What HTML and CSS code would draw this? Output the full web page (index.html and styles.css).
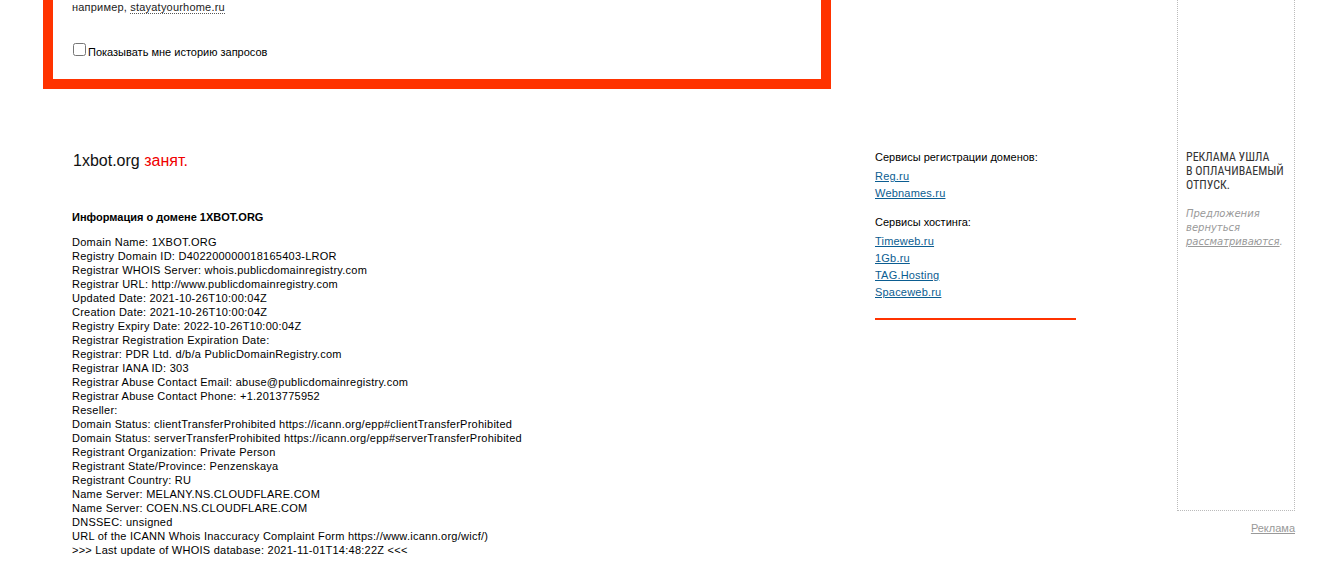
FILE: index.html
```html
<!DOCTYPE html>
<html lang="ru">
<head>
<meta charset="utf-8">
<title>Whois 1xbot.org</title>
<link rel="stylesheet" href="styles.css">
</head>
<body>
<div class="page">
  <div class="main">
    <div class="search-box">
      <p class="hint">например, <span class="example">stayatyourhome.ru</span></p>
      <label class="history"><input type="checkbox" class="check"><span>Показывать мне историю запросов</span></label>
    </div>
    <div class="result-row">
      <div class="result">
        <h1 class="status">1xbot.org <span class="busy">занят.</span></h1>
        <h2 class="info-title">Информация о домене 1XBOT.ORG</h2>
        <pre class="whois">Domain Name: 1XBOT.ORG
Registry Domain ID: D402200000018165403-LROR
Registrar WHOIS Server: whois.publicdomainregistry.com
Registrar URL: http://www.publicdomainregistry.com
Updated Date: 2021-10-26T10:00:04Z
Creation Date: 2021-10-26T10:00:04Z
Registry Expiry Date: 2022-10-26T10:00:04Z
Registrar Registration Expiration Date:
Registrar: PDR Ltd. d/b/a PublicDomainRegistry.com
Registrar IANA ID: 303
Registrar Abuse Contact Email: abuse@publicdomainregistry.com
Registrar Abuse Contact Phone: +1.2013775952
Reseller:
Domain Status: clientTransferProhibited https://icann.org/epp#clientTransferProhibited
Domain Status: serverTransferProhibited https://icann.org/epp#serverTransferProhibited
Registrant Organization: Private Person
Registrant State/Province: Penzenskaya
Registrant Country: RU
Name Server: MELANY.NS.CLOUDFLARE.COM
Name Server: COEN.NS.CLOUDFLARE.COM
DNSSEC: unsigned
URL of the ICANN Whois Inaccuracy Complaint Form https://www.icann.org/wicf/)
&gt;&gt;&gt; Last update of WHOIS database: 2021-11-01T14:48:22Z &lt;&lt;&lt;</pre>
      </div>
      <div class="services">
        <p class="svc-title">Сервисы регистрации доменов:</p>
        <ul class="svc-list">
          <li><a href="#">Reg.ru</a></li>
          <li><a href="#">Webnames.ru</a></li>
        </ul>
        <p class="svc-title">Сервисы хостинга:</p>
        <ul class="svc-list">
          <li><a href="#">Timeweb.ru</a></li>
          <li><a href="#">1Gb.ru</a></li>
          <li><a href="#">TAG.Hosting</a></li>
          <li><a href="#">Spaceweb.ru</a></li>
        </ul>
        <div class="svc-rule"></div>
      </div>
    </div>
  </div>
  <aside class="ad-col">
    <div class="ad-box">
      <p class="ad-head">РЕКЛАМА УШЛА<br>В ОПЛАЧИВАЕМЫЙ<br>ОТПУСК.</p>
      <p class="ad-note">Предложения<br>вернуться<br><a href="#">рассматриваются</a>.</p>
    </div>
    <a class="ad-link" href="#">Реклама</a>
  </aside>
</div>
</body>
</html>
```

FILE: styles.css
```css
html, body {
  margin: 0;
  padding: 0;
  background: #fff;
}
body {
  font-family: "Liberation Sans", Arial, sans-serif;
  font-size: 11px;
  line-height: 14px;
  color: #000;
}
.page {
  display: flex;
  padding-left: 43px;
}
.main {
  width: 1134px;
}
.search-box {
  height: 79px;
  border: 10px solid #ff3300;
  border-top: 0;
  padding: 0 0 0 19px;
  box-sizing: content-box;
  width: 749px;
}
.hint {
  margin: 0;
  color: #222;
  letter-spacing: 0.2px;
}
.example {
  border-bottom: 1px dotted #555;
}
.history {
  display: flex;
  align-items: center;
  margin-top: 31px;
  color: #000;
}
.check {
  margin: 0 2px 0 1px;
  width: 13px;
  height: 13px;
  position: relative;
  top: -3px;
}
.result-row {
  display: flex;
  margin-top: 61px;
}
.result {
  width: 832px;
  padding-left: 30px;
  box-sizing: border-box;
}
.status {
  margin: 0;
  font-weight: normal;
  font-size: 16px;
  line-height: 22px;
  color: #111;
}
.busy {
  color: #f00000;
}
.info-title {
  margin: 38px 0 0 -1px;
  font-size: 11px;
  line-height: 14px;
  font-weight: bold;
}
.whois {
  margin: 11px 0 0 -1px;
  font-family: "Liberation Sans", Arial, sans-serif;
  font-size: 11px;
  line-height: 14px;
  letter-spacing: 0.25px;
  white-space: pre;
}
.services {
  width: 201px;
}
.svc-title {
  margin: 0;
  line-height: 14px;
}
.svc-list {
  list-style: none;
  margin: 4px 0 0 0;
  padding: 0;
}
.svc-list li {
  line-height: 17px;
  letter-spacing: 0.2px;
}
.svc-list + .svc-title {
  margin-top: 13px;
}
.svc-list a {
  color: #0b5d91;
  text-decoration: underline;
}
.svc-rule {
  margin-top: 17px;
  height: 2px;
  background: #ff3300;
}
.ad-col {
  width: 118px;
  display: flex;
  flex-direction: column;
  align-items: flex-end;
}
.ad-box {
  width: 118px;
  height: 511px;
  box-sizing: border-box;
  border: 1px dotted #bbb;
  border-top: 0;
  padding: 150px 4px 0 8px;
}
.ad-head {
  margin: 0;
  font-family: "Liberation Sans Narrow", "Roboto Condensed", "Liberation Sans", sans-serif;
  font-stretch: condensed;
  font-size: 12px;
  line-height: 14px;
  color: #333;
}
.ad-note {
  margin: 15px 0 0 0;
  font-family: "DejaVu Sans", sans-serif;
  font-style: italic;
  font-size: 10px;
  line-height: 14px;
  color: #999;
}
.ad-note a {
  color: #999;
}
.ad-link {
  margin-top: 10px;
  color: #999;
  text-decoration: underline;
}
```
